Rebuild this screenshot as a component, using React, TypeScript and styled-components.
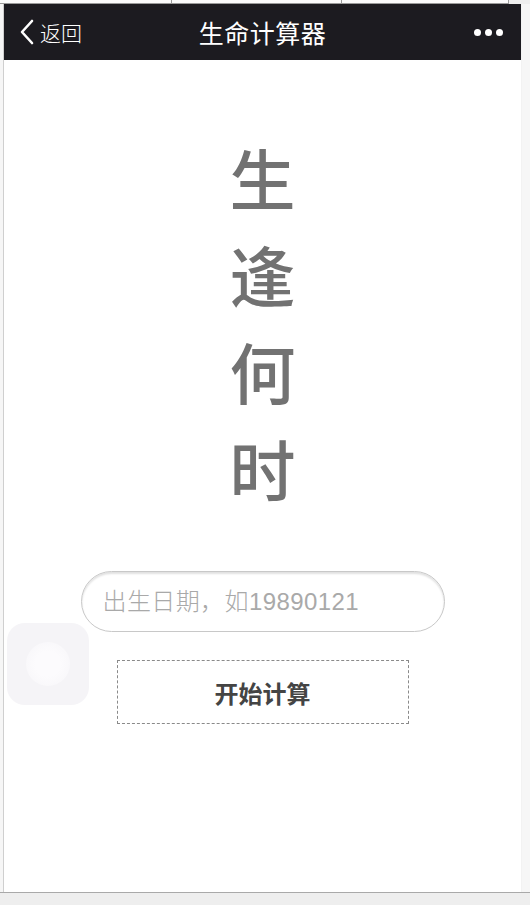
import React, { useState } from 'react';
import styled, { createGlobalStyle } from 'styled-components';

const GlobalStyle = createGlobalStyle`
  html, body {
    margin: 0;
    padding: 0;
    background: #eeeeee;
    font-family: "Liberation Sans", "Noto Sans CJK SC", sans-serif;
  }
`;

const Screen = styled.div`
  width: 530px;
  height: 905px;
  display: flex;
  flex-direction: column;
  overflow: hidden;
  position: relative;
`;

const TopStrip = styled.div`
  display: flex;
  height: 3px;
  width: 509px;
  background: #fbfbfb;
  border-bottom: 1px solid #9a9a9a;
`;

const StripCell = styled.div<{ $w: number }>`
  width: ${(p) => p.$w}px;
  border-right: 1px solid #9a9a9a;
`;

const Frame = styled.div`
  display: flex;
  height: 888px;
  background: #f6f6f6;
`;

const LeftEdge = styled.div`
  width: 3px;
  border-right: 1px solid #cfcfcf;
`;

const Phone = styled.div`
  width: 517px;
  display: flex;
  flex-direction: column;
  background: #ffffff;
  border-right: 1px solid #f2f2f2;
`;

const NavBar = styled.div`
  height: 56px;
  background: #1c1b20;
  color: #fff;
  display: grid;
  grid-template-columns: 1fr auto 1fr;
  align-items: center;
  padding: 0 18px 0 15px;
  font-family: "Noto Sans CJK SC", sans-serif;
`;

const Back = styled.div`
  display: flex;
  align-items: center;
  gap: 5px;
  font-size: 21px;
  font-weight: 300;
`;

const Title = styled.div`
  font-size: 25px;
  font-weight: 400;
  letter-spacing: 0.5px;
  margin-left: 3px;
`;

const Dots = styled.div`
  justify-self: end;
  display: flex;
  gap: 4px;
`;

const Dot = styled.span`
  width: 7px;
  height: 7px;
  border-radius: 50%;
  background: #fff;
`;

const Content = styled.div`
  flex: 1;
  display: flex;
  flex-direction: column;
  align-items: center;
  padding-top: 68px;
`;

const Motto = styled.div`
  display: flex;
  flex-direction: column;
  align-items: center;
  color: #727272;
  font-family: "Noto Sans CJK SC", sans-serif;
  font-size: 66px;
  line-height: 97px;
  font-weight: 500;
`;

const DateInput = styled.input`
  margin-top: 55px;
  width: 364px;
  height: 61px;
  box-sizing: border-box;
  border: 1px solid #c8c8c8;
  border-radius: 31px;
  padding: 0 21px;
  font-family: "Liberation Sans", "Noto Sans CJK SC", sans-serif;
  font-size: 24px;
  font-weight: 300;
  letter-spacing: 0.4px;
  color: #555;
  outline: none;
  box-shadow: inset 0 2px 2px rgba(0, 0, 0, 0.12);
  &::placeholder {
    color: #a9a9a9;
  }
`;

const StartButton = styled.button`
  margin-top: 28px;
  width: 292px;
  height: 64px;
  box-sizing: border-box;
  border: 1px dashed #8a8a8a;
  background: #fff;
  font-family: "Noto Sans CJK SC", sans-serif;
  font-size: 24px;
  font-weight: 700;
  color: #444;
  cursor: pointer;
`;

const Assistive = styled.div`
  position: absolute;
  left: 7px;
  top: 623px;
  width: 82px;
  height: 82px;
  border-radius: 18px;
  background: #f5f4f7;
  display: flex;
  align-items: center;
  justify-content: center;
`;

const AssistiveRing = styled.div`
  width: 44px;
  height: 44px;
  border-radius: 50%;
  background: radial-gradient(circle, #fcfbfd 40%, #f6f5f8 100%);
`;

const Footer = styled.div`
  flex: 1;
  border-top: 1px solid #a9a9a9;
  background: #eeeeee;
`;

const App: React.FC = () => {
  const [birth, setBirth] = useState('');

  return (
    <>
      <GlobalStyle />
      <Screen>
        <TopStrip>
          <StripCell $w={172} />
          <StripCell $w={169} />
          <StripCell $w={167} />
        </TopStrip>
        <Frame>
          <LeftEdge />
          <Phone>
            <NavBar>
              <Back>
                <svg width="16" height="26" viewBox="0 0 16 26">
                  <path d="M13 2 L3 13 L13 24" fill="none" stroke="#fff" strokeWidth="2.6" strokeLinecap="round" strokeLinejoin="round" />
                </svg>
                <span>返回</span>
              </Back>
              <Title>生命计算器</Title>
              <Dots>
                <Dot />
                <Dot />
                <Dot />
              </Dots>
            </NavBar>
            <Content>
              <Motto>
                <span>生</span>
                <span>逢</span>
                <span>何</span>
                <span>时</span>
              </Motto>
              <DateInput
                type="text"
                placeholder="出生日期，如19890121"
                value={birth}
                onChange={(e) => setBirth(e.target.value)}
              />
              <StartButton>开始计算</StartButton>
            </Content>
          </Phone>
        </Frame>
        <Footer />
        <Assistive>
          <AssistiveRing />
        </Assistive>
      </Screen>
    </>
  );
};

export default App;
